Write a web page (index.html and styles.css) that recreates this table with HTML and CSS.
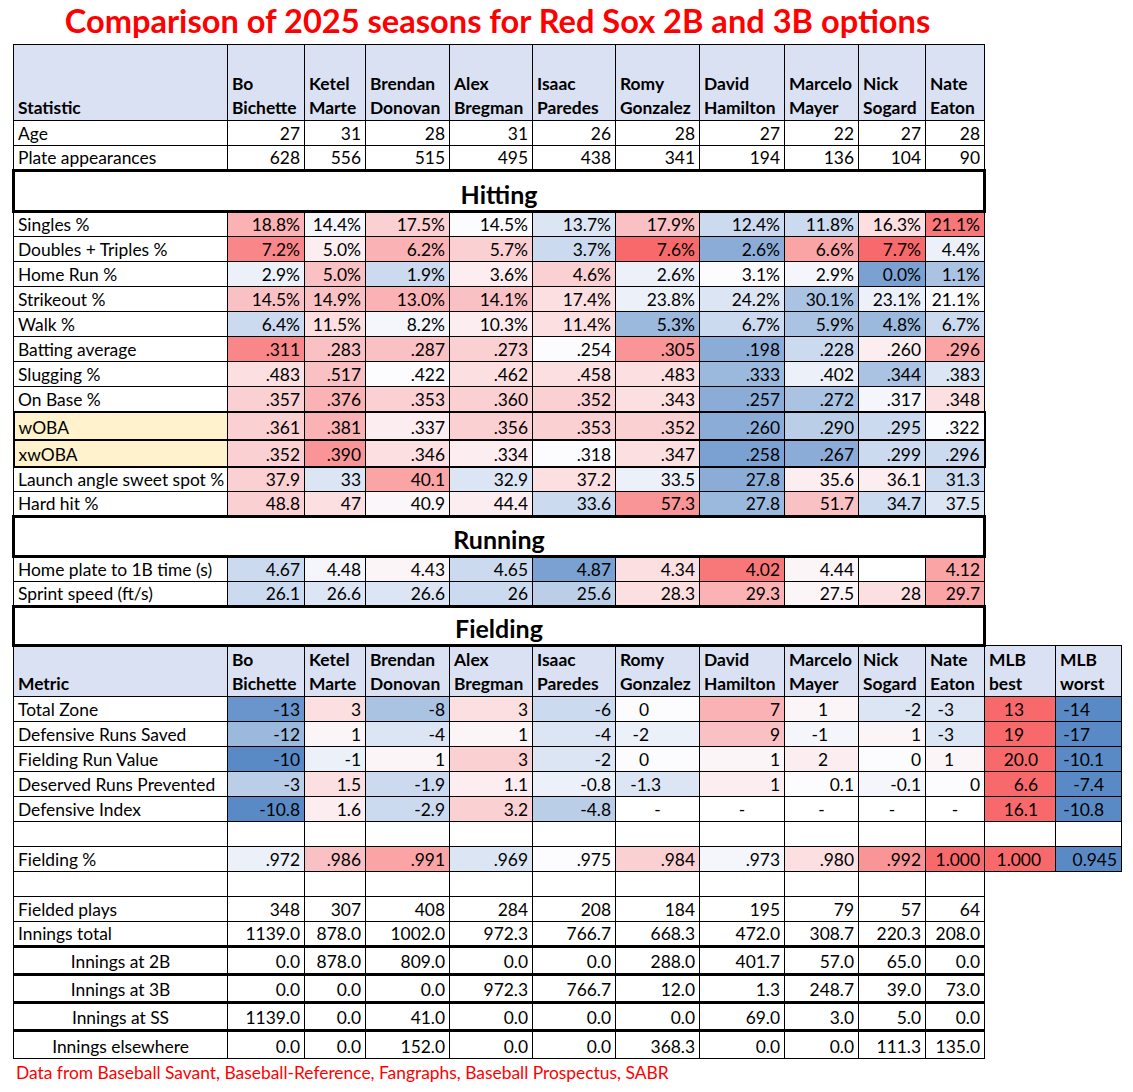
FILE: index.html
```html
<!DOCTYPE html>
<html>
<head>
<meta charset="utf-8">
<link rel="stylesheet" href="styles.css">
</head>
<body>
<div class="page">
  <div class="title">Comparison of 2025 seasons for Red Sox 2B and 3B options</div>
  <table class="sheet">
    <colgroup>
      <col class="c-stat"><col class="c-bo"><col class="c-ke"><col class="c-br"><col class="c-al"><col class="c-is"><col class="c-ro"><col class="c-da"><col class="c-ma"><col class="c-ni"><col class="c-na"><col class="c-best"><col class="c-worst">
    </colgroup>
    <tbody>
      <tr class="hdr">
        <th>Statistic</th><th>Bo<br>Bichette</th><th>Ketel<br>Marte</th><th>Brendan<br>Donovan</th><th>Alex<br>Bregman</th><th>Isaac<br>Paredes</th><th>Romy<br>Gonzalez</th><th>David<br>Hamilton</th><th>Marcelo<br>Mayer</th><th>Nick<br>Sogard</th><th>Nate<br>Eaton</th>
      </tr>
      <tr><td class="lbl">Age</td><td>27</td><td>31</td><td>28</td><td>31</td><td>26</td><td>28</td><td>27</td><td>22</td><td>27</td><td>28</td></tr>
      <tr><td class="lbl">Plate appearances</td><td>628</td><td>556</td><td>515</td><td>495</td><td>438</td><td>341</td><td>194</td><td>136</td><td>104</td><td>90</td></tr>

      <tr class="sec"><td colspan="11">Hitting</td></tr>
      <tr><td class="lbl">Singles %</td><td class="r5">18.8%</td><td class="bh">14.4%</td><td class="r3">17.5%</td><td class="w">14.5%</td><td class="b2">13.7%</td><td class="r4">17.9%</td><td class="b3">12.4%</td><td class="b3">11.8%</td><td class="r2">16.3%</td><td class="r9">21.1%</td></tr>
      <tr><td class="lbl">Doubles + Triples %</td><td class="r8">7.2%</td><td class="r1">5.0%</td><td class="r5">6.2%</td><td class="r3">5.7%</td><td class="b3">3.7%</td><td class="r10">7.6%</td><td class="b7">2.6%</td><td class="r6">6.6%</td><td class="r10">7.7%</td><td class="b1">4.4%</td></tr>
      <tr><td class="lbl">Home Run %</td><td class="b1">2.9%</td><td class="r4">5.0%</td><td class="b3">1.9%</td><td class="r1">3.6%</td><td class="r3">4.6%</td><td class="b1">2.6%</td><td class="w">3.1%</td><td class="bh">2.9%</td><td class="b8">0.0%</td><td class="b5">1.1%</td></tr>
      <tr><td class="lbl">Strikeout %</td><td class="r4">14.5%</td><td class="r4">14.9%</td><td class="r5">13.0%</td><td class="r4">14.1%</td><td class="r2">17.4%</td><td class="b1">23.8%</td><td class="b2">24.2%</td><td class="b5">30.1%</td><td class="b1">23.1%</td><td class="w">21.1%</td></tr>
      <tr><td class="lbl">Walk %</td><td class="b3">6.4%</td><td class="r2">11.5%</td><td class="bh">8.2%</td><td class="r1">10.3%</td><td class="r2">11.4%</td><td class="b6">5.3%</td><td class="b3">6.7%</td><td class="b5">5.9%</td><td class="b6">4.8%</td><td class="b3">6.7%</td></tr>
      <tr><td class="lbl">Batting average</td><td class="r8">.311</td><td class="r4">.283</td><td class="r4">.287</td><td class="r3">.273</td><td class="w">.254</td><td class="r7">.305</td><td class="b7">.198</td><td class="b3">.228</td><td class="r1">.260</td><td class="r6">.296</td></tr>
      <tr><td class="lbl">Slugging %</td><td class="r2">.483</td><td class="r4">.517</td><td class="w">.422</td><td class="r2">.462</td><td class="r2">.458</td><td class="r2">.483</td><td class="b6">.333</td><td class="b1">.402</td><td class="b5">.344</td><td class="b2">.383</td></tr>
      <tr><td class="lbl">On Base %</td><td class="r3">.357</td><td class="r5">.376</td><td class="r3">.353</td><td class="r3">.360</td><td class="r3">.352</td><td class="r2">.343</td><td class="b7">.257</td><td class="b5">.272</td><td class="bh">.317</td><td class="r2">.348</td></tr>
      <tr class="wo"><td class="lbl y">wOBA</td><td class="r3">.361</td><td class="r5">.381</td><td class="r1">.337</td><td class="r3">.356</td><td class="r3">.353</td><td class="r3">.352</td><td class="b7">.260</td><td class="b4">.290</td><td class="b3">.295</td><td class="w last">.322</td></tr>
      <tr class="wo wo2"><td class="lbl y">xwOBA</td><td class="r3">.352</td><td class="r7">.390</td><td class="r2">.346</td><td class="r1">.334</td><td class="w">.318</td><td class="r2">.347</td><td class="b8">.258</td><td class="b7">.267</td><td class="b3">.299</td><td class="b3 last">.296</td></tr>
      <tr><td class="lbl">Launch angle sweet spot %</td><td class="r3">37.9</td><td class="b2">33</td><td class="r6">40.1</td><td class="b2">32.9</td><td class="r2">37.2</td><td class="b1">33.5</td><td class="b7">27.8</td><td class="r1">35.6</td><td class="r1">36.1</td><td class="b3">31.3</td></tr>
      <tr><td class="lbl">Hard hit %</td><td class="r3">48.8</td><td class="r2">47</td><td class="wh">40.9</td><td class="r1">44.4</td><td class="b3">33.6</td><td class="r7">57.3</td><td class="b6">27.8</td><td class="r4">51.7</td><td class="b3">34.7</td><td class="b2">37.5</td></tr>

      <tr class="sec sec2"><td colspan="11">Running</td></tr>
      <tr><td class="lbl">Home plate to 1B time (s)</td><td class="b3">4.67</td><td class="bh">4.48</td><td class="rh">4.43</td><td class="b3">4.65</td><td class="b8">4.87</td><td class="r2">4.34</td><td class="r9">4.02</td><td class="rh">4.44</td><td></td><td class="r6">4.12</td></tr>
      <tr><td class="lbl">Sprint speed (ft/s)</td><td class="b3">26.1</td><td class="b2">26.6</td><td class="b2">26.6</td><td class="b3">26</td><td class="b4">25.6</td><td class="r2">28.3</td><td class="r5">29.3</td><td class="rh">27.5</td><td class="r2">28</td><td class="r6">29.7</td></tr>

      <tr class="sec sec3"><td colspan="11">Fielding</td></tr>
      <tr class="hdr hdr2">
        <th>Metric</th><th>Bo<br>Bichette</th><th>Ketel<br>Marte</th><th>Brendan<br>Donovan</th><th>Alex<br>Bregman</th><th>Isaac<br>Paredes</th><th>Romy<br>Gonzalez</th><th>David<br>Hamilton</th><th>Marcelo<br>Mayer</th><th>Nick<br>Sogard</th><th>Nate<br>Eaton</th><th>MLB<br>best</th><th>MLB<br>worst</th>
      </tr>
      <tr><td class="lbl">Total Zone</td><td class="b9">-13</td><td class="r2">3</td><td class="b5">-8</td><td class="r2">3</td><td class="b3">-6</td><td class="w ri">0</td><td class="r5">7</td><td class="rh ci">1</td><td class="b2">-2</td><td class="b2 ci">-3</td><td class="best ci">13</td><td class="worst ci">-14</td></tr>
      <tr><td class="lbl">Defensive Runs Saved</td><td class="b6">-12</td><td class="rh">1</td><td class="b2">-4</td><td class="rh">1</td><td class="b2">-4</td><td class="b1 ri">-2</td><td class="r4">9</td><td class="bh ci">-1</td><td class="rh">1</td><td class="b2 ci">-3</td><td class="best ci">19</td><td class="worst ci">-17</td></tr>
      <tr><td class="lbl">Fielding Run Value</td><td class="b10">-10</td><td class="b1">-1</td><td class="rh">1</td><td class="r3">3</td><td class="b2">-2</td><td class="w ri">0</td><td class="rh">1</td><td class="r1 ci">2</td><td class="w">0</td><td class="rh ci">1</td><td class="best cd">20.0</td><td class="worst cd">-10.1</td></tr>
      <tr><td class="lbl">Deserved Runs Prevented</td><td class="b4">-3</td><td class="r2">1.5</td><td class="b3">-1.9</td><td class="r1">1.1</td><td class="b1">-0.8</td><td class="b2 rd">-1.3</td><td class="r1">1</td><td class="w">0.1</td><td class="bh">-0.1</td><td class="w">0</td><td class="best cd">6.6</td><td class="worst cd">-7.4</td></tr>
      <tr><td class="lbl">Defensive Index</td><td class="b10">-10.8</td><td class="r1">1.6</td><td class="b3">-2.9</td><td class="r3">3.2</td><td class="b4">-4.8</td><td class="c">-</td><td class="c">-</td><td class="c">-</td><td class="c">-</td><td class="c">-</td><td class="best cd">16.1</td><td class="worst cd">-10.8</td></tr>
      <tr><td class="lbl"></td><td></td><td></td><td></td><td></td><td></td><td></td><td></td><td></td><td></td><td></td><td></td><td></td></tr>
      <tr><td class="lbl">Fielding %</td><td class="b1">.972</td><td class="r4">.986</td><td class="r6">.991</td><td class="b2">.969</td><td class="w">.975</td><td class="r3">.984</td><td class="bh">.973</td><td class="r2">.980</td><td class="r7">.992</td><td class="r10">1.000</td><td class="best fb">1.000</td><td class="worst fw">0.945</td></tr>
      <tr><td class="lbl"></td><td></td><td></td><td></td><td></td><td></td><td></td><td></td><td></td><td></td><td></td></tr>
      <tr><td class="lbl">Fielded plays</td><td>348</td><td>307</td><td>408</td><td>284</td><td>208</td><td>184</td><td>195</td><td>79</td><td>57</td><td>64</td></tr>
      <tr><td class="lbl">Innings total</td><td>1139.0</td><td>878.0</td><td>1002.0</td><td>972.3</td><td>766.7</td><td>668.3</td><td>472.0</td><td>308.7</td><td>220.3</td><td>208.0</td></tr>
      <tr class="inn"><td class="lbl">Innings at 2B</td><td>0.0</td><td>878.0</td><td>809.0</td><td>0.0</td><td>0.0</td><td>288.0</td><td>401.7</td><td>57.0</td><td>65.0</td><td>0.0</td></tr>
      <tr class="inn"><td class="lbl">Innings at 3B</td><td>0.0</td><td>0.0</td><td>0.0</td><td>972.3</td><td>766.7</td><td>12.0</td><td>1.3</td><td>248.7</td><td>39.0</td><td>73.0</td></tr>
      <tr class="inn"><td class="lbl">Innings at SS</td><td>1139.0</td><td>0.0</td><td>41.0</td><td>0.0</td><td>0.0</td><td>0.0</td><td>69.0</td><td>3.0</td><td>5.0</td><td>0.0</td></tr>
      <tr class="inn"><td class="lbl">Innings elsewhere</td><td>0.0</td><td>0.0</td><td>152.0</td><td>0.0</td><td>0.0</td><td>368.3</td><td>0.0</td><td>0.0</td><td>111.3</td><td>135.0</td></tr>
    </tbody>
  </table>
  <div class="note">Data from Baseball Savant, Baseball-Reference, Fangraphs, Baseball Prospectus, SABR</div>
</div>
</body>
</html>
```
FILE: styles.css
```css
html, body {
  margin: 0;
  padding: 0;
  background: #ffffff;
}
body {
  font-family: Lato, "Liberation Sans", sans-serif;
  font-size: 17.4px;
  color: #000;
}
.page {
  padding-left: 12px;
}
.title {
  width: 971px;
  box-sizing: border-box;
  height: 44px;
  padding-top: 3px;
  text-align: center;
  color: #ff0000;
  font-weight: 700;
  font-size: 32.6px;
  line-height: 36px;
  white-space: nowrap;
}
.sheet {
  border-collapse: collapse;
  table-layout: fixed;
  width: 1108px;
}
.c-stat { width: 214px; }
.c-bo { width: 77px; }
.c-ke { width: 61px; }
.c-br { width: 84px; }
.c-al { width: 83px; }
.c-is { width: 83px; }
.c-ro { width: 84px; }
.c-da { width: 85px; }
.c-ma { width: 74px; }
.c-ni { width: 67px; }
.c-na { width: 59px; }
.c-best { width: 71px; }
.c-worst { width: 66px; }

.sheet td, .sheet th {
  border: 1px solid #000;
  padding: 0 4px 1px 4px;
  height: 25px;
  box-sizing: border-box;
  line-height: 20px;
  vertical-align: bottom;
  text-align: right;
  white-space: nowrap;
  overflow: hidden;
}
.sheet td.lbl {
  text-align: left;
  padding-left: 4px;
}
.hdr th {
  height: 76px;
  background: #d9e1f2;
  font-weight: 700;
  text-align: left;
  line-height: 24px;
  padding-bottom: 0;
  padding-left: 4px;
}
.hdr2 th { height: 51px; }

.sec td {
  border: 3px solid #000;
  height: 41px;
  text-align: center;
  font-weight: 700;
  font-size: 25px;
  line-height: 28px;
  padding-bottom: 2px;
}
.sec2 td { height: 40px; }
.sec3 td { height: 39px; }

.wo td { border-top: 2px solid #000; border-bottom: 2px solid #000; height: 28px; }
.wo td.lbl { border-left: 2px solid #000; }
.wo td.last { border-right: 2px solid #000; }
.wo2 td { height: 27px; }
.y { background: #fff2cc; }

.inn td { border-top: 3px solid #000; height: 28px; }
.sheet .inn td.lbl { text-align: center; }

.sheet td.c { text-align: center; }
.sheet td.ci { padding-right: 30px; }
.sheet td.cd { padding-right: 17px; }
.sheet td.ri { padding-right: 50px; }
.sheet td.rd { padding-right: 38px; }
.sheet td.best.ci, .sheet td.worst.ci { padding-right: 31px; }
.sheet td.worst { padding-right: 17px; }
.sheet td.fb { padding-right: 14px; }
.sheet td.fw { padding-right: 4px; }

.best { background: #f8696b; }
.worst { background: #5a8ac6; }

.w { background: #fcfcff; }
.wh { background: #faf6f9; }
.rh { background: #fcf5f8; }
.r1 { background: #fcedf0; }
.r2 { background: #fbdfe1; }
.r3 { background: #fbd0d3; }
.r4 { background: #fac1c4; }
.r5 { background: #fab2b5; }
.r6 { background: #faa4a6; }
.r7 { background: #f99597; }
.r8 { background: #f98689; }
.r9 { background: #f8787a; }
.r10 { background: #f8696b; }
.bh { background: #f4f6fc; }
.b1 { background: #ecf1f9; }
.b2 { background: #dce5f4; }
.b3 { background: #cbdaee; }
.b4 { background: #bbcee8; }
.b5 { background: #abc3e3; }
.b6 { background: #9bb8dd; }
.b7 { background: #8bacd7; }
.b8 { background: #7aa1d1; }
.b9 { background: #6a95cc; }
.b10 { background: #5a8ac6; }

.note {
  color: #ff0000;
  font-size: 17.4px;
  line-height: 20px;
  padding-top: 4px;
  padding-left: 4px;
}
```
